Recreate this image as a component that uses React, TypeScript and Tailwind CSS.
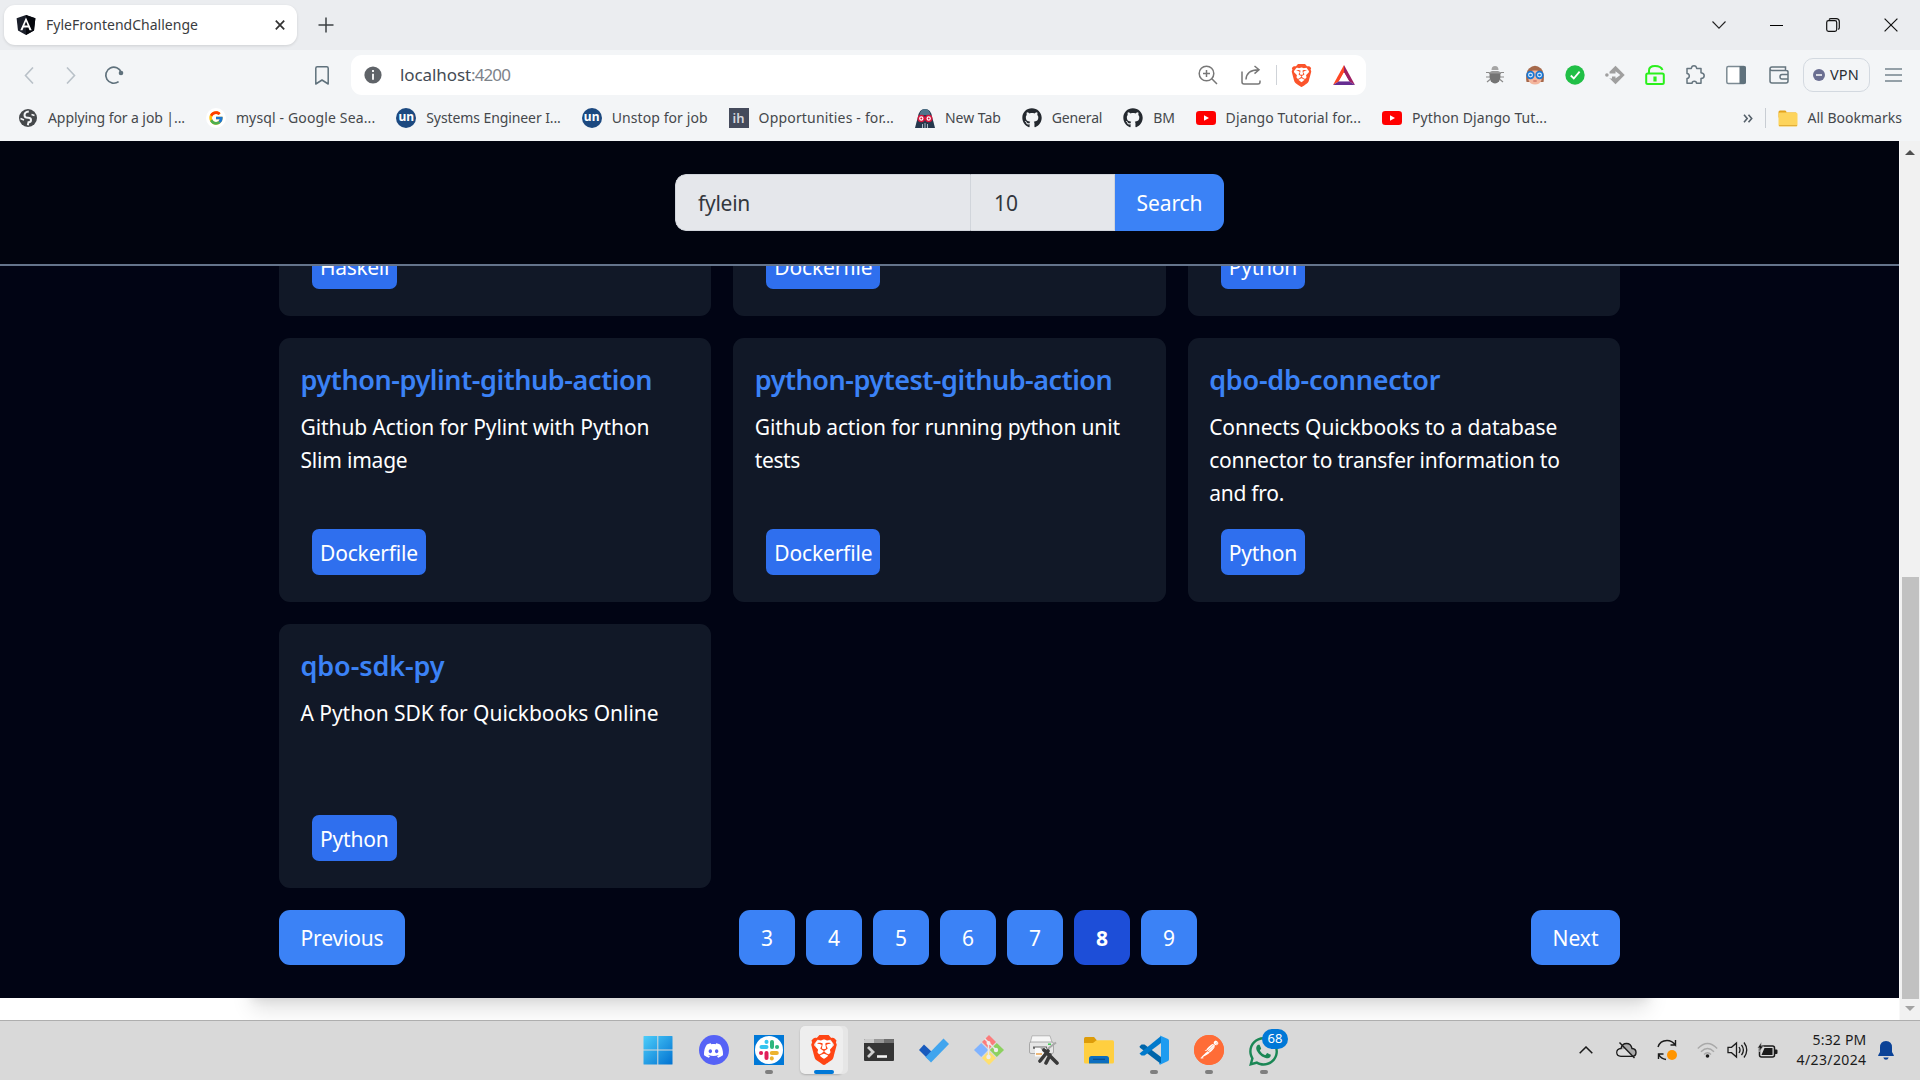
import React, { useLayoutEffect, useRef, useState } from "react";
import { SiBrave, SiDiscord, SiPostman } from "react-icons/si";
import { FaGithub, FaWhatsapp } from "react-icons/fa";
import { FcGoogle } from "react-icons/fc";

const UI = "font-['Noto_Sans',sans-serif]";

/* Single-line text whose letter spacing is adjusted to fill the given width. */
function Fit({ w, className = "", children }: { w: number; className?: string; children: string }) {
  const ref = useRef<HTMLSpanElement>(null);
  const [ls, setLs] = useState(0);
  useLayoutEffect(() => {
    const el = ref.current;
    if (!el) return;
    el.style.letterSpacing = "0px";
    setLs((w - el.getBoundingClientRect().width) / children.length);
    el.style.letterSpacing = "";
  }, [w, children]);
  return (
    <span ref={ref} className={`inline-block shrink-0 whitespace-nowrap ${className}`} style={{ letterSpacing: `${ls}px` }}>
      {children}
    </span>
  );
}

/* ---------- Browser chrome ---------- */

function AngularShield() {
  return (
    <svg viewBox="0 0 20 20" className="h-5 w-5">
      <path d="M10 0 19.4 3.2 18 15.4 10 20 2 15.4.6 3.2Z" fill="#1b1f2a" />
      <path d="M10 0 19.4 3.2 18 15.4 10 20Z" fill="#05070d" />
      <path fillRule="evenodd" d="M10 2.4 4.3 15.2h2.2l1.1-2.8h4.8l1.1 2.8h2.2ZM10 6.5l1.7 4.1H8.3Z" fill="#fff" />
    </svg>
  );
}

function TabStrip() {
  return (
    <div className="flex h-[50px] items-center bg-[#ebedf0] pl-1">
      <div className="flex h-10 w-[293px] items-center rounded-[11px] bg-white pl-3 shadow-[0_1px_3px_rgba(0,0,0,0.12)]">
        <AngularShield />
        <Fit w={152} className="ml-2.5 pb-px text-[14px] text-[#3a3c40]">FyleFrontendChallenge</Fit>
        <svg viewBox="0 0 10 10" className="ml-[77px] h-2.5 w-2.5" stroke="#333" strokeWidth="1.7">
          <path d="M.8.6 9.2 9.4M9.2.6.8 9.4" />
        </svg>
      </div>
      <svg viewBox="0 0 16 16" className="ml-[21px] h-4 w-4" stroke="#3c4043" strokeWidth="1.5">
        <path d="M8 .5v15M.5 8h15" />
      </svg>
      <div className="ml-auto flex items-center">
        <div className="flex w-[57px] justify-center">
          <svg viewBox="0 0 14 8" className="ml-px h-2 w-3.5" fill="none" stroke="#222" strokeWidth="1.1"><path d="M.5.5 7 7.2 13.5.5" /></svg>
        </div>
        <div className="flex w-[57px] justify-center"><div className="ml-0.5 h-px w-[13px] bg-black" /></div>
        <div className="flex w-[57px] justify-center">
          <svg viewBox="0 0 14 14" className="ml-px h-3.5 w-3.5" fill="none" stroke="#111" strokeWidth="1.2">
            <rect x=".7" y="2.7" width="10" height="10.6" rx="1.8" />
            <path d="M3 1.6Q3.6.6 5 .6h5.2Q13.3.6 13.3 3.6v6.2q0 1-1 1.6" />
          </svg>
        </div>
        <div className="flex w-[59px] justify-center">
          <svg viewBox="0 0 14 14" className="h-3.5 w-3.5" stroke="#111" strokeWidth="1.2"><path d="M.6.6 13.4 13.4M13.4.6.6 13.4" /></svg>
        </div>
      </div>
    </div>
  );
}

function Bug() {
  return (
    <svg viewBox="0 0 20 20" className="h-5 w-5">
      <path d="M1 7.5h3l2 2M1 12h4M2 17l3-2.500M19 7.500h-3l-2 2M19 12h-4M18 17l-3-2.500" stroke="#8b8b8b" strokeWidth="1.200" fill="none" />
      <path d="M6.500 5Q6.500 1 10 1t3.500 4Z" fill="#a5a5a5" />
      <path d="M5 7q5-2 10 0 1.300 6-1 9.500-4 4-8 0Q3.700 13 5 7Z" fill="#747474" />
      <path d="M5 7q5-2 10 0l.2 1.500H4.800Z" fill="#9a9a9a" />
    </svg>
  );
}

function GlassesFace() {
  return (
    <svg viewBox="0 0 20 20" className="h-5 w-5">
      <path d="M1.500 17Q0 8 4 3.500 10-2 16 3.500 20 8 18.500 17Z" fill="#a5694b" />
      <path d="M3.500 9Q5 5 10 5.500 15 5 16.500 9v6Q15 19.500 10 19.500T3.500 15Z" fill="#f4b69d" />
      <circle cx="5.500" cy="10" r="3.300" fill="#d7ecff" stroke="#1976d2" strokeWidth="1.700" />
      <circle cx="14.500" cy="10" r="3.300" fill="#d7ecff" stroke="#1976d2" strokeWidth="1.700" />
      <circle cx="5.500" cy="10" r="1.300" fill="#1976d2" /><circle cx="14.500" cy="10" r="1.300" fill="#1976d2" />
      <path d="M8.300 16h3.400" stroke="#c0564d" strokeWidth="1" />
    </svg>
  );
}

function Toolbar() {
  const grey = "#66757f";
  return (
    <div className="flex h-[50px] items-center bg-[#f3f5f7]">
      <svg viewBox="0 0 10 17" className="ml-6 h-[17px] w-2.5" fill="none" stroke="#b9c1c8" strokeWidth="1.600"><path d="M9 .5 1.500 8.500 9 16.500" /></svg>
      <svg viewBox="0 0 10 17" className="ml-8 h-[17px] w-2.5" fill="none" stroke="#b9c1c8" strokeWidth="1.600"><path d="M1 .5 8.500 8.500 1 16.500" /></svg>
      <svg viewBox="0 0 20 20" className="ml-7 h-5 w-5" fill="none" stroke="#5f717c" strokeWidth="1.700">
        <path d="M14.600 16.600A8 8 0 1 1 17.300 7.500" />
        <circle cx="17" cy="8" r="2.300" fill="#5f717c" stroke="none" />
      </svg>
      <svg viewBox="0 0 14 19" className="ml-[191px] h-[19px] w-3.5" fill="none" stroke="#5f717c" strokeWidth="1.500" strokeLinejoin="round">
        <path d="M.8 2.300Q.8.800 2.300.800h9.400q1.500 0 1.500 1.500V18L7 14 .8 18Z" />
      </svg>
      <div className="ml-[22px] flex h-10 w-[1015px] items-center rounded-[11px] bg-white">
        <svg viewBox="0 0 18 18" className="ml-[13px] h-[18px] w-[18px]">
          <circle cx="9" cy="9" r="8.600" fill="#5f6368" /><path d="M9 4v2M9 7.800v6" stroke="#fff" strokeWidth="1.800" />
        </svg>
        <Fit w={71} className="ml-[18px] pb-px text-[17px] text-[#444b54]">localhost</Fit>
        <Fit w={39} className="pb-px text-[17px] text-[#7d838a]">:4200</Fit>
        <svg viewBox="0 0 20 20" className="ml-[688px] h-5 w-5" fill="none" stroke="#777" strokeWidth="1.500">
          <circle cx="8.500" cy="8.500" r="7.300" /><path d="m13.800 13.800 5.200 5.200M8.500 5v7M5 8.500h7" />
        </svg>
        <svg viewBox="0 0 20 20" className="ml-[23px] h-5 w-5" fill="none" stroke="#777" strokeWidth="1.500">
          <path d="M1 6.500V17q0 2 2 2h14q2 0 2-2v-1.500M5 14.500Q5.500 5 17.500 4.800M13.500 1l4.500 3.800-4.500 3.800" />
        </svg>
        <div className="ml-[15px] h-5 w-px bg-[#cfd3d8]" />
        <SiBrave className="ml-[13px] h-[23px] w-[23px] text-[#fb542b]" />
        <svg viewBox="0 0 22 20" className="ml-5 h-5 w-[22px]">
          <path d="M11 0 0 20l6-3.800 5-8.700Z" fill="#ff4724" /><path d="M11 0 22 20l-6-3.800-5-8.700Z" fill="#9e1f63" /><path d="M0 20h22l-6-3.800H6Z" fill="#662d91" /><path d="M11 7.500 6 16.200h10Z" fill="#fff" />
        </svg>
      </div>
      <div className="ml-[109px] flex items-center">
        <div className="flex w-10 justify-center"><Bug /></div>
        <div className="flex w-10 justify-center"><GlassesFace /></div>
        <div className="flex w-10 justify-center">
          <svg viewBox="0 0 20 20" className="h-5 w-5"><circle cx="10" cy="10" r="9.700" fill="#20bf46" /><path d="m5.800 10.500 3 3 5.800-6.800" fill="none" stroke="#fff" strokeWidth="1.800" /></svg>
        </div>
        <div className="flex w-10 justify-center">
          <svg viewBox="0 0 20 20" className="h-5 w-5">
            <path d="M10.500.8 19.700 10l-9.200 9.200L4.500 13.200V6.800Z" fill="#9f9f9f" />
            <path d="M3.500 8.600h7V6.200l4.800 3.700-4.800 3.700v-2.200H7v2H3.500Z" fill="#f3f5f7" />
            <circle cx="1.900" cy="10" r="1.800" fill="#9f9f9f" />
          </svg>
        </div>
        <div className="flex w-10 justify-center">
          <svg viewBox="0 0 20 20" className="h-5 w-5" fill="none" stroke="#2af01c" strokeWidth="2"><rect x="1.200" y="8.500" width="17.600" height="10.500" rx="1.500" /><path d="M4 8V5.500Q4 1 10 1q6 0 7.500 4" /><path d="M10 11.500v5" strokeWidth="3.200" /></svg>
        </div>
        <div className="flex w-10 justify-center">
          <svg viewBox="0 0 20 20" className="h-5 w-5" fill="none" stroke={grey} strokeWidth="1.500" strokeLinejoin="round">
            <path d="M2 3.500h4.300q.4-2.700 2.700-2.700t2.700 2.700H16v4.300q3.200.4 3.200 2.900T16 13.600V18.200h-4.500q0-2-2.200-2t-2.200 2H2v-4.600q2.300-.3 2.300-2.600T2 8.400Z" />
          </svg>
        </div>
        <svg viewBox="0 0 20 20" className="ml-[11px] h-5 w-5"><rect x=".8" y="1.500" width="18.400" height="17" rx="1.500" fill="#fff" stroke="#7c8a93" strokeWidth="1.500" /><path d="M13.500 1h4.500q2 0 2 2v14q0 2-2 2h-4.500Z" fill="#5f717c" /></svg>
        <svg viewBox="0 0 20 20" className="ml-[23px] h-5 w-5" fill="none" stroke={grey} strokeWidth="1.500"><path d="M1 3.500V16q0 2 2 2h14q2 0 2-2V7q0-1.500-2-1.500H3q-2 0-2-1.700T3 2h13.500v3.500M19 9.500h-6q-2 0-2 2.300t2 2.300h6" /></svg>
        <div className="ml-3.5 flex h-[34px] w-[67px] items-center rounded-[10px] border border-[#d3d9e0] pl-[9px]">
          <svg viewBox="0 0 12 12" className="h-3 w-3"><circle cx="6" cy="6" r="6" fill="#6b6f91" /><path d="M3 6h6" stroke="#fff" strokeWidth="1.500" /></svg>
          <Fit w={29} className="ml-[5px] text-[14.500px] text-[#2a2d33]">VPN</Fit>
        </div>
        <svg viewBox="0 0 17 14" className="ml-[15px] h-3.5 w-[17px]" stroke="#75848e" strokeWidth="1.600"><path d="M0 1h17M0 7h17M0 13h17" /></svg>
      </div>
    </div>
  );
}

const youtube = (
  <svg viewBox="0 0 20 14" className="h-3.5 w-5"><rect width="20" height="14" rx="3.300" fill="#f00" /><path d="m8 4.200 5 2.800-5 2.800Z" fill="#fff" /></svg>
);
const unstop = (
  <span className={`flex h-5 w-5 items-center justify-center rounded-full bg-[#1c4980] pb-0.5 text-[12px] leading-none font-bold text-white ${UI}`}>un</span>
);
const globe = (
  <svg viewBox="0 0 18 18" className="h-[18px] w-[18px]"><circle cx="9" cy="9" r="9" fill="#45484b" /><path d="M9.800 2.500Q5.500 3 5.500 6.200q0 2.600 3.500 2.600 3 0 3 2.200T9.500 13.200L8.800 16.300" fill="none" stroke="#f3f5f7" strokeWidth="2" /><path d="M1.500 9.500 5 11M12.500 5.500l3 1" stroke="#f3f5f7" strokeWidth="1.500" /></svg>
);
const vader = (
  <svg viewBox="0 0 20 19" className="h-[19px] w-5"><path d="M3 8Q4 0 10 0t7 8l1.500 5L20 19H0l1.500-6Z" fill="#26384d" /><path d="M4.500 6q1-6 5.500-6t5.500 6Z" fill="#4d758c" /><circle cx="6.300" cy="9.500" r="3" fill="#fff" stroke="#d3143a" strokeWidth="1.600" /><circle cx="13.700" cy="9.500" r="3" fill="#fff" stroke="#d3143a" strokeWidth="1.600" /><circle cx="6.300" cy="9.500" r="1" fill="#d3143a" /><circle cx="13.700" cy="9.500" r="1" fill="#d3143a" /><path d="M7.500 15v4M10 14v5M12.500 15v4" stroke="#a9b9c6" strokeWidth="1" /></svg>
);
const hub = <FaGithub className="h-5 w-5 text-[#24292f]" />;

const bookmarks: { icon: React.ReactNode; text: string; w: number }[] = [
  { icon: globe, text: "Applying for a job |...", w: 137 },
  { icon: <span className="flex h-5 w-5 items-center justify-center rounded-full bg-white"><FcGoogle className="h-4 w-4" /></span>, text: "mysql - Google Sea...", w: 139.500 },
  { icon: unstop, text: "Systems Engineer I...", w: 134.500 },
  { icon: unstop, text: "Unstop for job", w: 96 },
  { icon: <span className={`flex h-5 w-5 items-center justify-center bg-[#454b5c] text-[13px] leading-none font-semibold text-[#d5d7dc] ${UI}`}>ih</span>, text: "Opportunities - for...", w: 135.5 },
  { icon: vader, text: "New Tab", w: 56 },
  { icon: hub, text: "General", w: 50.500 },
  { icon: hub, text: "BM", w: 21.500 },
  { icon: youtube, text: "Django Tutorial for...", w: 135.500 },
  { icon: youtube, text: "Python Django Tut...", w: 135 },
];

function BookmarkBar() {
  return (
    <div className="flex h-[41px] items-center bg-[#f3f5f7] pr-[18px] pb-[5px] pl-[18px] text-[14px] text-[#45484c]">
      <div className="flex gap-[20.900px]">
        {bookmarks.map((b, i) => (
          <div key={i} className="flex items-center gap-2.5">
            <span className="flex w-5 justify-center">{b.icon}</span>
            <Fit w={b.w} className="pb-0.5">{b.text}</Fit>
          </div>
        ))}
      </div>
      <svg viewBox="0 0 10 9" className="ml-auto h-[9px] w-2.5" fill="none" stroke="#55606a" strokeWidth="1.600"><path d="m1 .8 3.200 3.700L1 8.200M5.500.8l3.200 3.700-3.200 3.700" /></svg>
      <div className="ml-3 h-5 w-px bg-[#c8cdd3]" />
      <svg viewBox="0 0 20 17" className="ml-3 h-[17px] w-5"><path d="M.5 2Q.5.500 2 .5h5q1.500 0 1.500 2H18v5H.5Z" fill="#e3a31c" /><rect x=".5" y="2.500" width="19" height="14" rx="1.500" fill="#fdd45c" /><path d="M1 15.600h18" stroke="#e0ac35" /></svg>
      <Fit w={94.500} className="ml-2.5 pb-0.5">All Bookmarks</Fit>
    </div>
  );
}

/* ---------- Page ---------- */

type Line = { t: string; w: number };
type Repo = { title?: Line; lines?: Line[]; lang: Line };

const dockerfile = { t: "Dockerfile", w: 98 };
const python = { t: "Python", w: 68.500 };

const repos: Repo[] = [
  { lang: { t: "Haskell", w: 69 } },
  { lang: dockerfile },
  { lang: python },
  {
    title: { t: "python-pylint-github-action", w: 351.500 },
    lines: [{ t: "Github Action for Pylint with Python", w: 349 }, { t: "Slim image", w: 107 }],
    lang: dockerfile,
  },
  {
    title: { t: "python-pytest-github-action", w: 357.500 },
    lines: [{ t: "Github action for running python unit", w: 365 }, { t: "tests", w: 45 }],
    lang: dockerfile,
  },
  {
    title: { t: "qbo-db-connector", w: 231 },
    lines: [
      { t: "Connects Quickbooks to a database", w: 348 },
      { t: "connector to transfer information to", w: 350.500 },
      { t: "and fro.", w: 75 },
    ],
    lang: python,
  },
  {
    title: { t: "qbo-sdk-py", w: 144 },
    lines: [{ t: "A Python SDK for Quickbooks Online", w: 358 }],
    lang: python,
  },
];

function Card({ repo }: { repo: Repo }) {
  return (
    <div className="flex h-[264px] flex-col rounded-[11px] bg-[#111827] pt-[22px] pr-[22px] pb-[27px] pl-[21.500px] text-[21px] text-white">
      {repo.title && (
        <h2 className="mb-[11px] h-10 text-[27px] leading-10 font-semibold text-[#3b82f6]">
          <Fit w={repo.title.w}>{repo.title.t}</Fit>
        </h2>
      )}
      {repo.lines?.map((l) => (
        <p key={l.t} className="h-[33px] leading-[33px]"><Fit w={l.w}>{l.t}</Fit></p>
      ))}
      <div className="mt-auto ml-[11.500px] flex h-[46px] items-center self-start rounded-[7px] bg-[#2f6fee] px-2 pt-[3px]">
        <Fit w={repo.lang.w}>{repo.lang.t}</Fit>
      </div>
    </div>
  );
}

function Page() {
  return (
    <div className="flex w-[1899px] flex-col bg-white">
      <header className="flex h-[125px] shrink-0 items-center justify-center border-b-2 border-[#64748b] bg-[#01040f] text-[21px]">
        <div className="flex h-[57px] overflow-hidden rounded-[11px]">
          <div className="flex w-[296px] items-center rounded-l-[11px] border border-[#d1d5db] bg-[#e5e7eb] pt-0.5 pl-[22px] text-[#33373d]"><Fit w={52}>fylein</Fit></div>
          <div className="flex w-[144px] items-center border-y border-r border-[#d1d5db] bg-[#e5e7eb] pt-0.5 pl-[23px] text-[#33373d]"><Fit w={24}>10</Fit></div>
          <button className="flex w-[109px] items-center justify-center bg-[#3b82f6] pt-0.5 text-white"><Fit w={66}>Search</Fit></button>
        </div>
      </header>
      <main className="flex h-[732px] shrink-0 flex-col justify-end overflow-hidden bg-[#010414] px-[279px] pb-[33px]">
        <div className="grid shrink-0 grid-cols-3 gap-[22px]">
          {repos.map((r, i) => <Card key={i} repo={r} />)}
        </div>
        <div className="mt-[22px] flex h-[55px] shrink-0 items-stretch justify-between text-[21px] text-white">
          <button className="flex w-[126px] items-center justify-center rounded-[11px] bg-[#3b82f6] pt-0.5"><Fit w={83}>Previous</Fit></button>
          <div className="flex gap-[11px]">
            {[3, 4, 5, 6, 7, 8, 9].map((n) => (
              <button key={n} className={`w-14 rounded-[11px] pt-0.5 ${n === 8 ? "bg-[#1d4ed8] font-bold" : "bg-[#3b82f6]"}`}>{n}</button>
            ))}
          </div>
          <button className="flex w-[89px] items-center justify-center rounded-[11px] bg-[#3b82f6] pt-0.5"><Fit w={46}>Next</Fit></button>
        </div>
      </main>
      <div className="h-[22px] overflow-hidden">
        <div className="mx-auto -mt-[200px] h-[200px] w-[1402px] shadow-[0_14px_20px_-3px_rgba(0,0,0,0.12),0_5px_8px_-2px_rgba(0,0,0,0.06)]" />
      </div>
    </div>
  );
}

function Scrollbar() {
  return (
    <div className="flex w-[21px] flex-col items-center border-l border-[#f8f8f8] bg-[#f1f1f1]">
      <svg viewBox="0 0 10 5" className="mt-[9px] h-[5px] w-2.5"><path d="M5 0 10 5H0Z" fill="#505050" /></svg>
      <div className="mt-auto h-[422px] w-[17px] bg-[#c1c1c1]" />
      <svg viewBox="0 0 10 5" className="mt-[7px] mb-[9px] h-[5px] w-2.5"><path d="M5 5 10 0H0Z" fill="#a3a3a3" /></svg>
    </div>
  );
}

/* ---------- Taskbar ---------- */

function Slack() {
  return (
    <svg viewBox="0 0 30 30" className="h-[30px] w-[30px]">
      <rect width="30" height="30" fill="#0078d7" /><circle cx="15" cy="15" r="14" fill="#fff" />
      <g strokeWidth="4" strokeLinecap="round">
        <path d="M7.500 12h5" stroke="#36c5f0" /><path d="M12.500 6.800v.1" stroke="#36c5f0" />
        <path d="M18 7v5" stroke="#2eb67d" /><path d="M23 12h.1" stroke="#2eb67d" />
        <path d="M17.800 18h5" stroke="#ecb22e" /><path d="M17.800 23.300v.1" stroke="#ecb22e" />
        <path d="M12.500 18v5" stroke="#e01e5a" /><path d="M7 18h.1" stroke="#e01e5a" />
      </g>
    </svg>
  );
}

const taskIcons: { icon: React.ReactNode; dot?: boolean }[] = [
  {
    icon: (
      <svg viewBox="0 0 30 30" className="h-[30px] w-[30px]">
        <defs><linearGradient id="win" gradientUnits="userSpaceOnUse" x1="0" y1="0" x2="30" y2="30"><stop offset="0" stopColor="#4fd0fb" /><stop offset="1" stopColor="#0070d0" /></linearGradient></defs>
        <path fill="url(#win)" d="M.5 1.500q0-.5.5-.500h13.300v13.500H.5ZM15.300 1H29q.5 0 .5.500v13H15.300ZM.5 15.500h13.800V29.500H1q-.5 0-.5-.500ZM15.300 15.500h14.200V29q0 .5-.5.500H15.300Z" />
      </svg>
    ),
  },
  { icon: <span className="flex h-[30px] w-[30px] items-center justify-center rounded-full bg-[#5662f6]"><SiDiscord className="h-[19px] w-[19px] text-white" /></span> },
  { icon: <Slack />, dot: true },
  {
    icon: (
      <span className="relative flex h-[30px] w-[30px] items-center justify-center">
        <svg viewBox="0 0 30 30" className="absolute h-[30px] w-[30px]"><path d="m7 7 8-3 8 3v13l-8 6-8-6Z" fill="#fff" /></svg>
        <SiBrave className="relative h-[30px] w-[30px] text-[#ff4514]" />
      </span>
    ),
  },
  {
    icon: (
      <svg viewBox="0 0 30 22" className="h-[22px] w-[30px]"><rect width="30" height="22" rx="1" fill="#353535" /><path d="M0 1q0-1 1-1h9v4H0Z" fill="#c9c9c9" /><path d="M10 0h10v4H10Z" fill="#989898" /><path d="M20 0h9q1 0 1 1v3H20Z" fill="#6e6e6e" /><path d="m4 8 5 5-5 5" fill="none" stroke="#cfcfcf" strokeWidth="2.800" /><path d="M13 17.500h10" stroke="#f3f3f3" strokeWidth="2.600" /></svg>
    ),
  },
  {
    icon: (
      <svg viewBox="0 0 30 25" className="h-[25px] w-[30px]"><path d="m0 12 5-5.500 9.500 9-5 6Z" fill="#185abd" /><path d="M24.500.5 30 6 12 24.500 6.500 19Z" fill="#41a5ee" /></svg>
    ),
  },
  {
    icon: (
      <svg viewBox="0 0 30 30" className="h-[30px] w-[30px]"><path d="m15 0 7 7-7 7-7-7Z" fill="#fb7c7c" /><path d="m7.200 8 7 7-7 7-7.200-7Z" fill="#80b3ff" /><path d="m22.800 8 7.200 7-7.200 7-7-7Z" fill="#8cd15f" /><path d="m15 16 7 7-7 7-7-7Z" fill="#ffe06f" /><path d="m10.500 3.500 4 4v15M15 8l7 7" stroke="#e9e9e9" strokeWidth="1.500" fill="none" /><circle cx="14.500" cy="8" r="2" fill="#eee" /><circle cx="14.500" cy="22" r="2.200" fill="#eee" /><circle cx="22" cy="15" r="2.200" fill="#eee" /></svg>
    ),
  },
  {
    icon: (
      <svg viewBox="0 0 30 30" className="h-[30px] w-[30px]">
        <path d="M3 .8h18l2.500 8H1Z" fill="#f6f6f6" stroke="#aaa" strokeWidth=".8" />
        <rect x=".5" y="7" width="24" height="11.500" rx="1.500" fill="#e6e6e6" stroke="#999" strokeWidth=".8" />
        <path d="M4 11.500h14v2.300H4Z" fill="#666" /><path d="M6 12.500h11v9H6Z" fill="#fafafa" />
        <path d="M7 19h6" stroke="#eba450" strokeWidth="1.500" /><path d="M19 9.200h3" stroke="#3eca52" strokeWidth="1.500" />
        <path d="m16 16 11-8.500M15 16l-3-4" stroke="#a9a9a9" strokeWidth="2.200" fill="none" />
        <path d="m11 26 8-10M28 28 15 15M17 28l4-8" stroke="#393939" strokeWidth="3.600" strokeLinecap="round" />
      </svg>
    ),
  },
  {
    icon: (
      <svg viewBox="0 0 30 27" className="h-[27px] w-[30px]"><path d="M0 1.500Q0 0 1.500 0H10l3 3.500-3 4H0Z" fill="#dd9c0a" /><path d="M0 6h9l3.500-2.700H28.500Q30 3.300 30 5v20q0 1.500-1.500 1.500h-27Q0 26.500 0 25Z" fill="#ffcf40" /><path d="M5 26.500v-5q0-2.500 2.500-2.500h15q2.500 0 2.500 2.500v5Z" fill="#0c6ebf" /><path d="M9 22.300h12" stroke="#084b8a" strokeWidth="1.200" /></svg>
    ),
  },
  {
    icon: (
      <svg viewBox="0 0 30 30" className="h-[30px] w-[30px]"><path d="M.5 11.500 2.500 9.500l3 .1L22 22v7L1 12.700Z" fill="#0065a9" /><path d="M.5 18.500 22 1v7L5.500 20.500h-3Z" fill="#007acc" /><path d="M21 .4 29 4q1 .5 1 1.700v18.600q0 1.200-1 1.700l-8 3.700q-1-.3-1-1.700h2V2q-1-1-1-1.600Z" fill="#1f9cf0" /></svg>
    ),
    dot: true,
  },
  { icon: <span className="flex h-[30px] w-[30px] items-center justify-center rounded-full bg-[#ff6c37]"><span className="absolute h-6 w-6 rounded-full bg-white" /><SiPostman className="relative h-[30px] w-[30px] text-[#ff6c37]" /></span>, dot: true },
  {
    icon: (
      <span className="relative block h-[31px] w-[31px]">
        <FaWhatsapp className="-ml-px h-[33px] w-[33px] text-[#1b8755]" />
        <span className="absolute -top-[6px] left-[14px] flex h-[20px] w-[26px] items-center justify-center rounded-full bg-[#0078d7] text-[13px] leading-none text-white">68</span>
      </span>
    ),
    dot: true,
  },
];

function Tray() {
  return (
    <div className="ml-auto flex items-center pr-[26.500px] text-[#1b1b1b]">
      <svg viewBox="0 0 14 8" className="h-2 w-3.5" fill="none" stroke="#1b1b1b" strokeWidth="1.500"><path d="M.7 7.300 7 1l6.300 6.300" /></svg>
      <svg viewBox="0 0 21 18" className="ml-[23px] h-[18px] w-[21px]" fill="none" stroke="#1b1b1b" strokeWidth="1.400">
        <path d="M5 15.300Q.8 15 .8 11.500T5 7.500Q6 2.500 10.500 2.500T16 7.500q4 .2 4 4t-4 3.800Z" fill="#a9a9a9" /><path d="M5 8.500 9 8l8 6.500H5Q1.500 14.500 1.500 11.500T5 8.500Z" fill="#dcdcdc" stroke="none" /><path d="M3.500 1.500 18.500 17" />
      </svg>
      <svg viewBox="0 0 22 22" className="ml-[19px] h-[22px] w-[22px]" fill="none" stroke="#1b1b1b" strokeWidth="1.400">
        <path d="M2 8Q4 1.500 11 1.500q5 0 8.500 4.500V1M19.500 6h-5M2.500 20v-5h5M2.500 15Q5 20 10 20.500" /><circle cx="16" cy="16" r="5" fill="#ff9500" stroke="none" />
      </svg>
      <svg viewBox="0 0 21 16" className="ml-[19px] h-4 w-[21px]" fill="none" stroke="#a9a9a9" strokeWidth="1.400">
        <path d="M.8 6.500q9.700-10 19.400 0M4 9.700q6.500-6.500 13 0M7 12.500q3.500-3.500 7 0" /><circle cx="10.500" cy="14" r="1.800" fill="#1b1b1b" stroke="none" />
      </svg>
      <svg viewBox="0 0 21 18" className="ml-[9px] h-[18px] w-[21px]" fill="none" stroke="#1b1b1b" strokeWidth="1.300">
        <path d="M1 6.300h3.500L9.500 2v14l-5-4.300H1Z" /><path d="M12 6q2 3 0 6M14.500 3.800q3.800 5.200 0 10.400M17 1.500q5.500 7.500 0 15" />
      </svg>
      <svg viewBox="0 0 21 17" className="ml-[9px] h-[17px] w-[21px]"><rect x="2.500" y="4" width="15" height="11" rx="2" fill="none" stroke="#1b1b1b" strokeWidth="1.500" /><path d="M4.500 13 7.500 6h8v7ZM18 7.500h1.500q1 0 1 1V11q0 1-1 1H18Z" fill="#1b1b1b" /><path d="M4.500 0 .5 6H3L2 10l4.500-6H4Z" fill="#1b1b1b" stroke="#d9d9d9" strokeWidth=".5" /></svg>
      <div className="ml-[19px] flex flex-col items-end text-[14px] leading-[20.500px]">
        <Fit w={54}>5:32 PM</Fit>
        <Fit w={70}>4/23/2024</Fit>
      </div>
      <svg viewBox="0 0 16 19" className="ml-[11px] h-[19px] w-4" fill="#0a4297"><path d="M8 0q6 0 6 6.500V11l1.800 3.200v.8H.2v-.8L2 11V6.500Q2 0 8 0ZM5.300 16.500h5.400Q10 18.800 8 18.800t-2.700-2.300Z" /></svg>
    </div>
  );
}

function Taskbar() {
  return (
    <div className="flex h-[60px] border-t border-[#aeaeae] bg-[#d9d9d9] pb-px pl-[629px]">
      {taskIcons.map((t, i) => {
        const active = i === 3;
        return (
          <div key={i} className={`flex shrink-0 justify-center pt-[5px] ${i === 0 ? "w-[57px]" : "w-[55px]"}`}>
            <div
              className={`relative flex h-12 w-[43px] items-center justify-center rounded-[5px] ${
                active ? "left-[-2px] bg-[#eee] shadow-[5px_0_0_#e6e6e6,0_1px_2px_rgba(0,0,0,0.2)]" : ""
              }`}
            >
              <div className={active ? "relative left-[2px]" : ""}>{t.icon}</div>
              {t.dot && <div className="absolute bottom-0 h-1 w-2 rounded-full bg-[#7f7f7f]" />}
              {active && <div className="absolute bottom-0 left-[14px] h-1 w-5 rounded-full bg-[#0078d7]" />}
            </div>
          </div>
        );
      })}
      <Tray />
    </div>
  );
}

export default function App() {
  return (
    <div className={`flex h-[1080px] w-[1920px] flex-col overflow-hidden ${UI}`}>
      <TabStrip />
      <Toolbar />
      <BookmarkBar />
      <div className="flex h-[879px] shrink-0">
        <Page />
        <Scrollbar />
      </div>
      <Taskbar />
    </div>
  );
}
